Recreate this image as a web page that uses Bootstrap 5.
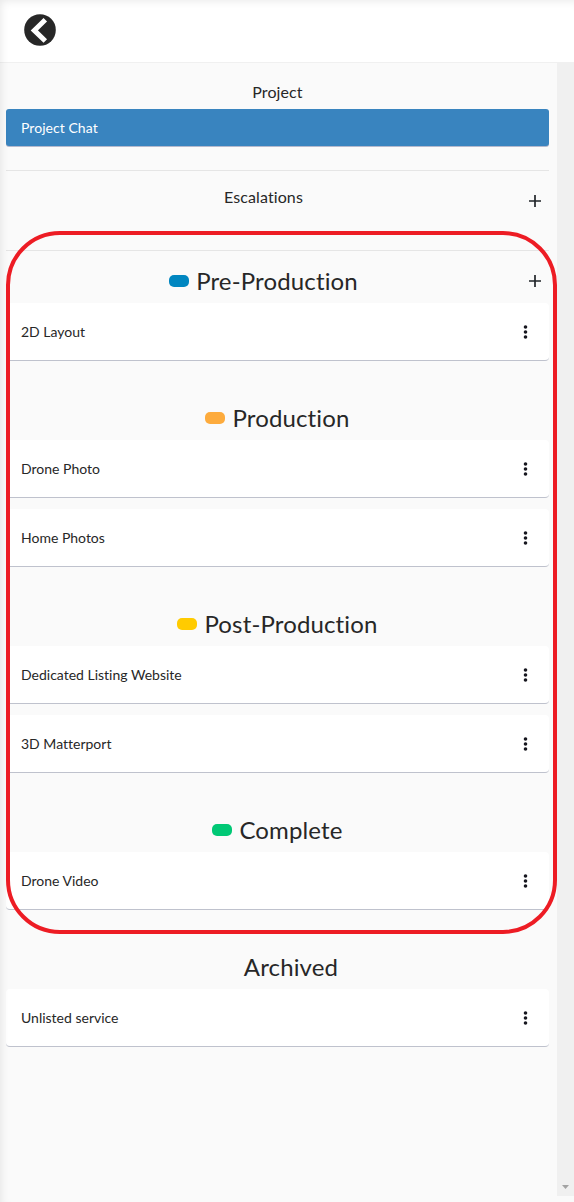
<!DOCTYPE html>
<html lang="en">
<head>
<meta charset="utf-8">
<meta name="viewport" content="width=device-width, initial-scale=1">
<title>Project Chat</title>
<link href="https://cdn.jsdelivr.net/npm/bootstrap@5.3.0/dist/css/bootstrap.min.css" rel="stylesheet">
<style>
  body { font-family: Lato, sans-serif; font-variant-ligatures: none; color: #272727; background: #fafafa; height: 1202px; overflow: hidden; }
  .edge-shade { inset: 0; box-shadow: inset 4px 4px 8px -3px rgba(0,0,0,.09); pointer-events: none; z-index: 3; }
  .topbar { height: 63px; padding: 0 0 2px 24px; border-bottom: 1px solid #f0f0f0; }
  .main-area { height: 1139px; }
  .channels { padding: 0 8px 0 6px; }
  .rail { width: 17px; height: 1133px; background: #f0f0f0; padding: 0 4px 7px 4px; }
  .small-title { font-size: 16px; line-height: 24px; letter-spacing: .1px; }
  .project-title { padding-top: 17px; height: 46px; }
  .chat-link { height: 37px; padding-left: 15px; font-size: 14px; letter-spacing: .05px; border-radius: 3px; background: #3984bf; box-shadow: 0 1px 0 #b4b9cd; }
  .divider { height: 1px; background: #e5e5e5; }
  .first-divider { margin-top: 24px; }
  .escalations { height: 79px; padding-top: 14px; }
  .stage-title { height: 44px; margin: 35px 0 0; font-size: 24px; font-weight: 400; line-height: 44px; letter-spacing: .14px; }
  .first-stage { margin-top: 8px; }
  .pill { width: 20px; height: 12px; border-radius: 5px; margin-right: 7px; }
  .plus-slot { width: 28px; padding: 10px 0 0 8px; }
  .first-stage .plus-slot { padding-top: 16px; }
  .service { height: 58px; padding: 0 21px 0 15px; font-size: 14px; border-radius: 4px; background: #fff; border-bottom: 1px solid #bfc2cd; }
  .service + .service { margin-top: 11px; }
  .highlight-ring { left: 6px; top: 231px; width: 551px; height: 703px; border: 4px solid #ed1c24; border-radius: 54px; pointer-events: none; z-index: 4; }
  .c-blue { background: #0086c0; } .c-orange { background: #fdab3d; }
  .c-yellow { background: #ffcb00; } .c-green { background: #00c875; }
  svg { display: block; flex: none; }
</style>
</head>
<body class="position-relative">
<svg class="d-none">
  <symbol id="plus" viewBox="0 0 12 12"><path d="M0 6h12M6 0v12" stroke="#212529" stroke-width="1.7"/></symbol>
  <symbol id="dots" viewBox="0 0 5 14"><g fill="#17171f"><circle cx="2.5" cy="2" r="1.8"/><circle cx="2.5" cy="7" r="1.8"/><circle cx="2.5" cy="12" r="1.8"/></g></symbol>
</svg>
<header class="topbar d-flex align-items-center bg-white">
  <svg width="32" height="32" viewBox="0 0 32 32"><circle cx="16" cy="16" r="15.8" fill="#272727"/><path d="M19.500 7.500 10.300 16.400 19.500 25.300" fill="none" stroke="#fff" stroke-width="5" stroke-linecap="square" stroke-linejoin="miter"/></svg>
</header>
<div class="main-area d-flex">
  <main class="channels flex-grow-1">
    <div class="small-title project-title text-center">Project</div>
    <div class="chat-link d-flex align-items-center text-white">Project Chat</div>
    <div class="divider first-divider"></div>
    <div class="escalations d-flex">
      <div class="small-title flex-grow-1 text-center">Escalations</div>
      <div class="plus-slot"><svg width="12" height="12"><use href="#plus"/></svg></div>
    </div>
    <div class="divider"></div>

    <div class="d-flex first-stage">
      <h2 class="stage-title mt-0 flex-grow-1 d-flex justify-content-center align-items-center"><span class="pill c-blue"></span>Pre-Production</h2>
      <div class="plus-slot"><svg width="12" height="12"><use href="#plus"/></svg></div>
    </div>
    <div class="service d-flex align-items-center justify-content-between"><span>2D Layout</span><svg width="5" height="14"><use href="#dots"/></svg></div>

    <h2 class="stage-title d-flex justify-content-center align-items-center"><span class="pill c-orange"></span>Production</h2>
    <div class="service d-flex align-items-center justify-content-between"><span>Drone Photo</span><svg width="5" height="14"><use href="#dots"/></svg></div>
    <div class="service d-flex align-items-center justify-content-between"><span>Home Photos</span><svg width="5" height="14"><use href="#dots"/></svg></div>

    <h2 class="stage-title d-flex justify-content-center align-items-center"><span class="pill c-yellow"></span>Post-Production</h2>
    <div class="service d-flex align-items-center justify-content-between"><span>Dedicated Listing Website</span><svg width="5" height="14"><use href="#dots"/></svg></div>
    <div class="service d-flex align-items-center justify-content-between"><span>3D Matterport</span><svg width="5" height="14"><use href="#dots"/></svg></div>

    <h2 class="stage-title d-flex justify-content-center align-items-center"><span class="pill c-green"></span>Complete</h2>
    <div class="service d-flex align-items-center justify-content-between"><span>Drone Video</span><svg width="5" height="14"><use href="#dots"/></svg></div>

    <h2 class="stage-title d-flex justify-content-center align-items-center"><span class="pill"></span>Archived</h2>
    <div class="service d-flex align-items-center justify-content-between"><span>Unlisted service</span><svg width="5" height="14"><use href="#dots"/></svg></div>
  </main>
  <div class="rail d-flex align-items-end justify-content-center"><svg width="7" height="4" viewBox="0 0 7 4"><path d="M0 0h7L3.500 4z" fill="#a3a3a3"/></svg></div>
</div>
<div class="edge-shade position-absolute"></div>
<div class="highlight-ring position-absolute"></div>
<script src="https://cdn.jsdelivr.net/npm/bootstrap@5.3.0/dist/js/bootstrap.bundle.min.js"></script>
</body>
</html>
